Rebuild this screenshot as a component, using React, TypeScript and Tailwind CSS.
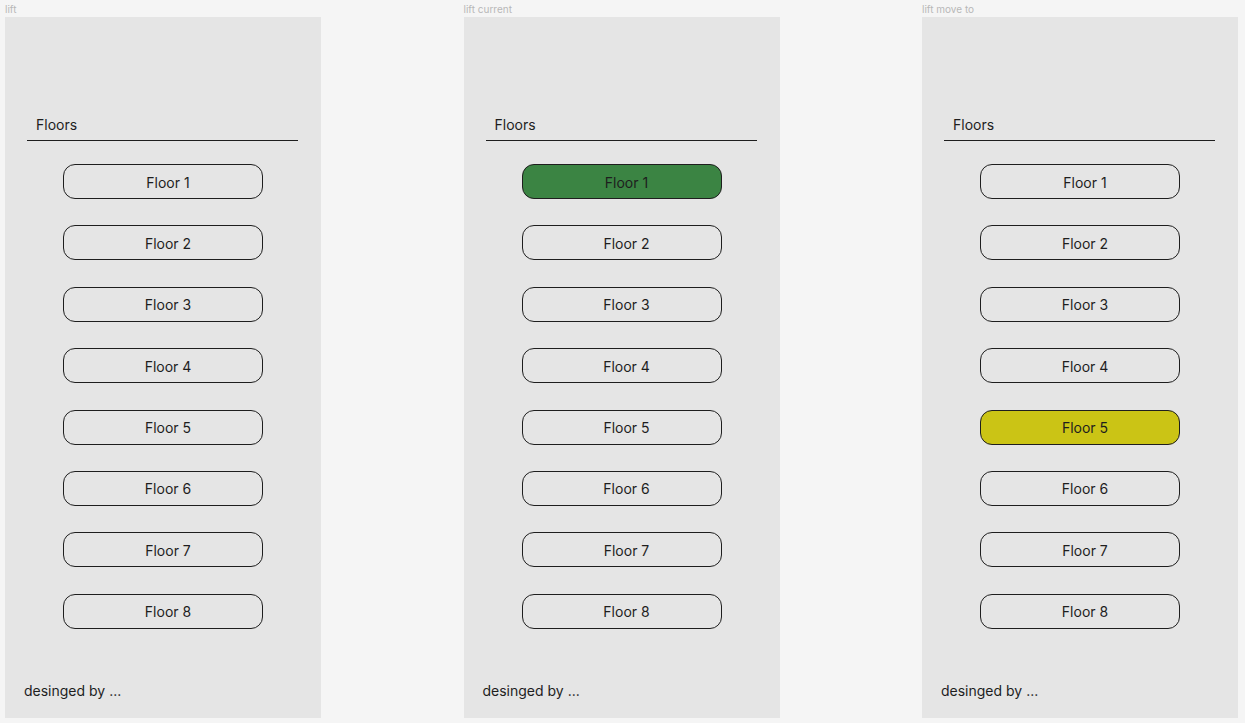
import React from "react";

type Panel = { label: string; active?: number; color?: string };

const panels: Panel[] = [
  { label: "lift" },
  { label: "lift current", active: 1, color: "bg-[#3b8443]" },
  { label: "lift move to", active: 5, color: "bg-[#cbc415]" },
];

const floors = [1, 2, 3, 4, 5, 6, 7, 8];

export default function App() {
  return (
    <div
      className="w-[1245px] h-[723px] bg-[#f5f5f5] flex pl-[5px] gap-[142.5px]"
      style={{ fontFamily: "Inter, 'Noto Sans', sans-serif" }}
    >
      {panels.map((p) => (
        <div key={p.label} className="w-[316px] flex flex-col">
          <div className="h-[17px] text-[10px] leading-[18px] text-[#b8b8b8]">
            {p.label}
          </div>
          <div className="h-[701px] bg-[#e5e5e5] flex flex-col">
            <div className="mt-[98px] ml-[22px] w-[271px] border-b border-[#1e1e1e] pl-[9px] pb-[5px] text-[14px] leading-[20px] text-[#1e1e1e]">
              Floors
            </div>
            <div className="mt-[23px] flex flex-col items-center gap-[26.4px]">
              {floors.map((f) => (
                <div
                  key={f}
                  className={`w-[200px] h-[35px] rounded-[12px] border border-[#1e1e1e] flex items-center justify-center pl-[10px] pt-[1px] text-[14px] text-[#1e1e1e] ${
                    p.active === f ? p.color : ""
                  }`}
                >
                  Floor {f}
                </div>
              ))}
            </div>
            <div className="mt-auto pl-[19px] pb-[17px] text-[14px] leading-[20px] text-[#1e1e1e]">
              desinged by ...
            </div>
          </div>
        </div>
      ))}
    </div>
  );
}
